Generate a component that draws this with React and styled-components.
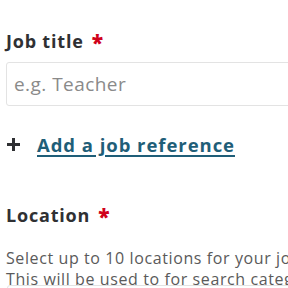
import React from "react";
import styled, { createGlobalStyle } from "styled-components";

const Global = createGlobalStyle`
  html, body { margin: 0; padding: 0; background: #fff; }
  body { font-family: "Open Sans", Lato, sans-serif; overflow: hidden; }
`;

const Page = styled.div`
  width: 288px;
  height: 288px;
  overflow: hidden;
  padding: 28px 0 0 6px;
  box-sizing: border-box;
`;

const Field = styled.div`
  display: flex;
  flex-direction: column;
  margin-top: ${(p) => p.$mt || 0}px;
  margin-bottom: ${(p) => p.$mb || 0}px;
`;

const Label = styled.label`
  font-size: 18px;
  font-weight: 700;
  letter-spacing: 0.8px;
  color: #2f3033;
  line-height: 26px;
  display: flex;
  gap: 8px;
  align-items: center;
`;

const Req = styled.span`
  color: #d0021b;
  font-size: 21px;
  font-weight: 800;
  line-height: 1;
  margin-top: 3px;
`;

const Input = styled.input`
  margin-top: ${(p) => p.$mt ?? 8}px;
  margin-left: ${(p) => p.$ml ?? 0}px;
  width: 320px;
  height: 44px;
  flex: none;
  box-sizing: border-box;
  border: 1px solid #e3e3e3;
  border-radius: 3px;
  padding: 0 7px;
  font-family: "Open Sans", sans-serif;
  font-size: 19px;
  letter-spacing: 0.45px;
  color: #333;
  &::placeholder { color: #8a8a8a; }
`;

const AddRow = styled.div`
  display: flex;
  align-items: center;
  gap: 17px;
  padding-left: 1px;
`;

const Link = styled.a`
  font-size: 18.5px;
  font-weight: 700;
  letter-spacing: 0.95px;
  color: #1f5e78;
  text-decoration: underline;
  text-decoration-thickness: 2px;
  text-underline-offset: 3px;
`;

const Help = styled.p`
  margin: 20px 0 0;
  font-size: 16px;
  letter-spacing: 0.6px;
  line-height: 21px;
  color: #5a5a5a;
  white-space: nowrap;
`;

export default function App() {
  return (
    <>
      <Global />
      <Page>
        <Field $mb={26}>
          <Label>Job title <Req>*</Req></Label>
          <Input placeholder="e.g. Teacher" />
        </Field>
        <AddRow>
          <svg width="13" height="13" viewBox="0 0 13 13">
            <path d="M6.5 0v13M0 6.5h13" stroke="#2f3033" strokeWidth="3" />
          </svg>
          <Link href="#">Add a job reference</Link>
        </AddRow>
        <Field $mt={45}>
          <Label>Location <Req>*</Req></Label>
          <Help>
            Select up to 10 locations for your job advert.<br />
            This will be used to for search categories.
          </Help>
          <Input $mt={-5} $ml={1} aria-label="Location" />
        </Field>
      </Page>
    </>
  );
}
